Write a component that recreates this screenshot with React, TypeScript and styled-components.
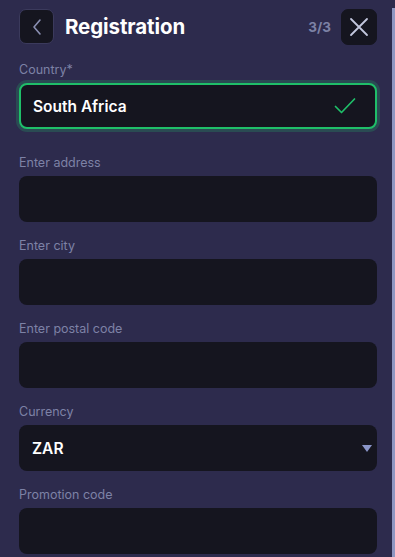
import React from "react";
import styled, { createGlobalStyle } from "styled-components";

const GlobalStyle = createGlobalStyle`
  html, body {
    margin: 0;
    padding: 0;
    background: #2d2b4d;
  }
  * {
    box-sizing: border-box;
  }
`;

const fields = [
  { label: "Enter address" },
  { label: "Enter city" },
  { label: "Enter postal code" },
];

const App: React.FC = () => {
  return (
    <>
      <GlobalStyle />
      <Page>
        <Header>
          <IconButton $bordered aria-label="Back">
            <svg width="14" height="18" viewBox="0 0 14 18" fill="none">
              <path d="M10 2 L4 9 L10 16" stroke="#8a8fb2" strokeWidth="1.6" strokeLinecap="round" strokeLinejoin="round" />
            </svg>
          </IconButton>
          <Title>Registration</Title>
          <Step>3/3</Step>
          <IconButton $large aria-label="Close">
            <svg width="20" height="20" viewBox="0 0 20 20" fill="none">
              <path d="M2 2 L18 18 M18 2 L2 18" stroke="#c3c7de" strokeWidth="1.8" strokeLinecap="round" />
            </svg>
          </IconButton>
        </Header>

        <Form>
          <Field $spaced>
            <Label>Country*</Label>
            <InputBox $valid>
              <Value>South Africa</Value>
              <svg width="22" height="18" viewBox="0 0 22 18" fill="none">
                <path d="M1.5 9.5 L7.5 15.5 L20.5 2" stroke="#1fbf69" strokeWidth="1.7" strokeLinecap="round" strokeLinejoin="round" />
              </svg>
            </InputBox>
          </Field>

          {fields.map((f) => (
            <Field key={f.label}>
              <Label>{f.label}</Label>
              <InputBox />
            </Field>
          ))}

          <Field>
            <Label>Currency</Label>
            <InputBox>
              <Value>ZAR</Value>
              <Caret />
            </InputBox>
          </Field>

          <Field>
            <Label>Promotion code</Label>
            <InputBox />
          </Field>
        </Form>
        <ScrollThumb />
      </Page>
    </>
  );
};

const Page = styled.div`
  position: relative;
  height: 557px;
  overflow: hidden;
  padding: 9px 18px 0 19px;
  font-family: Inter, "Noto Sans", sans-serif;
  background: #2d2b4d;
`;

const Header = styled.div`
  display: flex;
  align-items: center;
  height: 35px;
  margin-bottom: 18px;
`;

const IconButton = styled.button<{ $bordered?: boolean; $large?: boolean }>`
  display: flex;
  align-items: center;
  justify-content: center;
  width: ${(p) => (p.$large ? "36px" : "35px")};
  height: ${(p) => (p.$large ? "36px" : "35px")};
  padding: 0;
  border-radius: 7px;
  background: #15151f;
  border: 1px solid ${(p) => (p.$bordered ? "#3b3a5c" : "#15151f")};
  cursor: pointer;
`;

const Title = styled.h1`
  flex: 1;
  margin: 0 0 0 11px;
  font-size: 20.5px;
  font-weight: 700;
  letter-spacing: -0.1px;
  color: #ffffff;
`;

const Step = styled.span`
  margin-right: 10px;
  font-size: 13.5px;
  font-weight: 700;
  color: #7d82a6;
`;

const Form = styled.div`
  display: flex;
  flex-direction: column;
  gap: 16px;
`;

const Field = styled.div<{ $spaced?: boolean }>`
  display: flex;
  flex-direction: column;
  gap: 5px;
  margin-bottom: ${(p) => (p.$spaced ? "10px" : "0")};
`;

const Label = styled.label`
  font-size: 12.5px;
  line-height: 16px;
  color: #7d82a6;
`;

const InputBox = styled.div<{ $valid?: boolean }>`
  display: flex;
  align-items: center;
  justify-content: space-between;
  height: 46px;
  padding: 0 ${(p) => (p.$valid ? "19px" : "5px")} 0 ${(p) => (p.$valid ? "12px" : "13px")};
  border-radius: 8px;
  background: #15151f;
  border: ${(p) => (p.$valid ? "2px solid #1fbf69" : "none")};
  box-shadow: ${(p) => (p.$valid ? "0 0 0 3px rgba(31, 191, 105, 0.22)" : "none")};
`;

const Value = styled.span`
  font-size: 15.5px;
  font-weight: 600;
  color: #ffffff;
`;

const Caret = styled.span`
  width: 0;
  height: 0;
  border-left: 5.5px solid transparent;
  border-right: 5.5px solid transparent;
  border-top: 7px solid #8a95c8;
`;

const ScrollThumb = styled.div`
  position: absolute;
  top: 8px;
  right: 0;
  bottom: 0;
  width: 3px;
  background: #8e97c2;
`;

export default App;
